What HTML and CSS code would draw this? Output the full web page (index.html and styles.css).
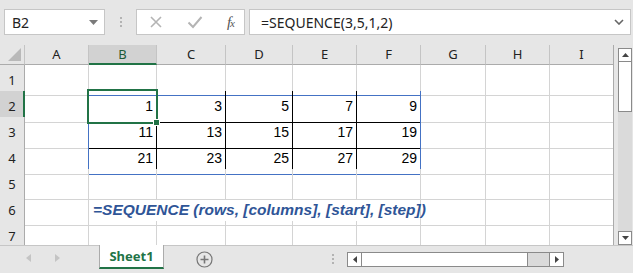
FILE: index.html
```html
<!DOCTYPE html>
<html lang="en">
<head>
<meta charset="UTF-8" />
<title>SEQUENCE</title>
<link rel="stylesheet" href="styles.css">
</head>
<body>
<div class="app">
  <!-- Formula bar -->
  <div class="toolbar">
    <div class="namebox">
      <span>B2</span>
      <svg class="caret" width="9" height="5" viewBox="0 0 9 5"><path d="M0 0h9L4.5 5z" fill="#7a7a7a"/></svg>
    </div>
    <div class="grip"><i></i><i></i><i></i></div>
    <div class="fxbox">
      <svg width="14" height="14" viewBox="0 0 14 14"><path d="M2 2l10 10M12 2L2 12" stroke="#b4b4b4" stroke-width="1.6"/></svg>
      <svg width="16" height="14" viewBox="0 0 16 14"><path d="M1.5 7.5l4.5 4.5 8.5-10" stroke="#b4b4b4" stroke-width="2" fill="none"/></svg>
      <span class="fx">f<sub>x</sub></span>
    </div>
    <div class="formula">
      <span>=SEQUENCE(3,5,1,2)</span>
      <svg width="10" height="6" viewBox="0 0 10 6"><path d="M1 1l4 4 4-4" stroke="#666" stroke-width="1.6" fill="none"/></svg>
    </div>
  </div>

  <!-- Sheet -->
  <div class="sheet">
    <div class="grid">
      <div class="row head">
        <div class="corner"><svg width="13" height="13" viewBox="0 0 13 13"><path d="M13 0V13H0z" fill="#b9b9b9"/></svg></div>
        <div class="ch">A</div><div class="ch sel">B</div><div class="ch">C</div><div class="ch">D</div>
        <div class="ch">E</div><div class="ch">F</div><div class="ch">G</div><div class="ch">H</div><div class="ch">I</div>
      </div>
      <div class="row">
        <div class="rh">1</div>
        <div class="c"></div><div class="c bb"></div><div class="c bb"></div><div class="c bb"></div><div class="c bb"></div><div class="c bb"></div>
        <div class="c"></div><div class="c"></div><div class="c"></div>
      </div>
      <div class="row">
        <div class="rh sel">2</div>
        <div class="c br"></div>
        <div class="c n k active">1</div><div class="c n k">3</div><div class="c n k">5</div><div class="c n k">7</div><div class="c n kb">9</div>
        <div class="c"></div><div class="c"></div><div class="c"></div>
      </div>
      <div class="row">
        <div class="rh">3</div>
        <div class="c br"></div>
        <div class="c n k">11</div><div class="c n k">13</div><div class="c n k">15</div><div class="c n k">17</div><div class="c n kb">19</div>
        <div class="c"></div><div class="c"></div><div class="c"></div>
      </div>
      <div class="row">
        <div class="rh">4</div>
        <div class="c br"></div>
        <div class="c n k last">21</div><div class="c n k last">23</div><div class="c n k last">25</div><div class="c n k last">27</div><div class="c n kb last">29</div>
        <div class="c"></div><div class="c"></div><div class="c"></div>
      </div>
      <div class="row">
        <div class="rh">5</div>
        <div class="c"></div><div class="c"></div><div class="c"></div><div class="c"></div><div class="c"></div><div class="c"></div>
        <div class="c"></div><div class="c"></div><div class="c"></div>
      </div>
      <div class="row">
        <div class="rh">6</div>
        <div class="c"></div>
        <div class="c syntax">=SEQUENCE (rows, [columns], [start], [step])</div>
        <div class="c"></div><div class="c"></div><div class="c"></div>
      </div>
      <div class="row">
        <div class="rh">7</div>
        <div class="c"></div><div class="c"></div><div class="c"></div><div class="c"></div><div class="c"></div><div class="c"></div>
        <div class="c"></div><div class="c"></div><div class="c"></div>
      </div>
    </div>

    <div class="vscroll">
      <div class="sbtn"><svg width="7" height="4" viewBox="0 0 7 4"><path d="M0 4h7L3.5 0z" fill="#444"/></svg></div>
      <div class="vthumb"></div>
      <div class="vtrack"></div>
      <div class="sbtn"><svg width="7" height="4" viewBox="0 0 7 4"><path d="M0 0h7L3.5 4z" fill="#444"/></svg></div>
    </div>
  </div>

  <!-- Sheet tabs -->
  <div class="tabs">
    <div class="nav">
      <svg width="5" height="8" viewBox="0 0 5 8"><path d="M5 0v8L0 4z" fill="#c4c4c4"/></svg>
      <svg width="5" height="8" viewBox="0 0 5 8"><path d="M0 0v8l5-4z" fill="#c4c4c4"/></svg>
    </div>
    <div class="tab">Sheet1</div>
    <div class="add">
      <svg width="17" height="17" viewBox="0 0 17 17"><circle cx="8.5" cy="8.5" r="7.5" fill="none" stroke="#777" stroke-width="1.2"/><path d="M8.5 4.5v8M4.5 8.5h8" stroke="#777" stroke-width="1.6"/></svg>
    </div>
    <div class="grip h"><i></i><i></i><i></i></div>
    <div class="hscroll">
      <div class="sbtn"><svg width="4" height="7" viewBox="0 0 4 7"><path d="M4 0v7L0 3.5z" fill="#444"/></svg></div>
      <div class="hthumb"></div>
      <div class="htrack"></div>
      <div class="sbtn"><svg width="4" height="7" viewBox="0 0 4 7"><path d="M0 0v7l4-3.5z" fill="#444"/></svg></div>
    </div>
  </div>
</div>
</body>
</html>
```

FILE: styles.css
```css
body {
  margin: 0;
  padding: 0;
  background: #e6e6e6;
  font-family: "Noto Sans", "Liberation Sans", sans-serif;
}
.app {
  width: 633px;
  height: 273px;
  overflow: hidden;
  display: flex;
  flex-direction: column;
  background: #e6e6e6;
}

/* Formula bar */
.toolbar {
  height: 45px;
  flex: none;
  display: flex;
  align-items: flex-start;
  padding: 9px 0 0 4px;
  box-sizing: border-box;
}
.namebox, .fxbox, .formula {
  height: 26px;
  background: #fff;
  border: 1px solid #c6c6c6;
  box-sizing: border-box;
  display: flex;
  align-items: center;
}
.namebox {
  width: 101px;
  padding: 0 6px 0 7px;
  justify-content: space-between;
  font-size: 14px;
  color: #222;
}
.grip {
  width: 31px;
  height: 26px;
  display: flex;
  flex-direction: column;
  align-items: center;
  justify-content: center;
  gap: 2px;
}
.grip i {
  width: 2px;
  height: 2px;
  background: #b3b3b3;
}
.fxbox {
  width: 109px;
  padding: 0 10px 0 12px;
  justify-content: space-between;
}
.fx {
  font-family: "Liberation Serif", serif;
  font-style: italic;
  font-size: 15px;
  color: #555;
  letter-spacing: -1px;
}
.fx sub {
  font-size: 11px;
  vertical-align: 0;
}
.formula {
  margin-left: 4px;
  width: 382px;
  padding: 0 6px 0 11px;
  justify-content: space-between;
  font-size: 14px;
  color: #222;
}

/* Sheet area */
.sheet {
  height: 200px;
  flex: none;
  display: flex;
}
.grid {
  width: 614px;
  height: 200px;
  overflow: hidden;
  background: #fff;
  border-right: 1px solid #ababab;
}
.row {
  display: grid;
  grid-template-columns: 25px 64px 68px 69px 67px 64px 64px 65px 64px 64px;
  height: 26px;
}
.row > div {
  box-sizing: border-box;
  border-right: 1px solid #d4d4d4;
  border-bottom: 1px solid #d4d4d4;
}
.row.head {
  height: 20px;
  background: #e6e6e6;
}
.row.head > div {
  border-right-color: #c4c4c4;
  border-bottom-color: #ababab;
}
.corner {
  display: flex;
  align-items: flex-end;
  justify-content: flex-end;
  padding: 0 3px 3px 0;
}
.ch {
  font-size: 13px;
  color: #222;
  text-align: center;
  line-height: 19px;
}
.ch.sel {
  background: #d2d2d2;
  color: #1d5a37;
  border-bottom: 2px solid #217346 !important;
  line-height: 18px;
}
.rh {
  background: #e6e6e6;
  font-size: 13px;
  color: #222;
  text-align: center;
  line-height: 30px;
  border-right-color: #ababab !important;
}
.rh.sel {
  background: #d2d2d2;
  border-right: 2px solid #217346 !important;
  padding-left: 1px;
}

/* Cells */
.c.n {
  font-family: "Liberation Sans", Arial, sans-serif;
  font-size: 14px;
  color: #000;
  text-align: right;
  padding-right: 3px;
  line-height: 31px;
}
.c.bb { border-bottom-color: #4472c4; }
.c.br { border-right-color: #4472c4; }
.c.k { border-right-color: #000; border-bottom-color: #000; }
.c.kb { border-right-color: #4472c4; border-bottom-color: #000; }
.c.last { border-bottom-color: #4472c4; }
.c.active { position: relative; }
.c.active::after {
  content: "";
  position: absolute;
  left: -2px;
  top: -2px;
  right: -2px;
  bottom: -2px;
  border: 2px solid #217346;
}
.c.active::before {
  content: "";
  position: absolute;
  right: -4px;
  bottom: -4px;
  width: 5px;
  height: 5px;
  background: #217346;
  border: 1px solid #fff;
  z-index: 1;
}
.syntax {
  grid-column: span 5;
  font-family: "Liberation Sans", Arial, sans-serif;
  font-weight: bold;
  font-style: italic;
  font-size: 15.5px;
  color: #2f5597;
  white-space: nowrap;
  line-height: 30px;
  padding-left: 4px;
}

/* Scrollbars */
.vscroll {
  width: 19px;
  padding: 3px 1px 0 4px;
  box-sizing: border-box;
  display: flex;
  flex-direction: column;
}
.sbtn {
  width: 14px;
  height: 14px;
  background: #fff;
  border: 1px solid #8a8a8a;
  box-sizing: border-box;
  display: flex;
  align-items: center;
  justify-content: center;
  flex: none;
}
.vthumb {
  height: 50px;
  background: #fff;
  border: 1px solid #8a8a8a;
  border-top: none;
  box-sizing: border-box;
}
.vtrack {
  flex: 1;
  background: #dadada;
}

.tabs {
  height: 28px;
  flex: none;
  display: flex;
  align-items: flex-start;
  border-top: 1px solid #c6c6c6;
  box-sizing: border-box;
}
.nav {
  width: 99px;
  display: flex;
  gap: 24px;
  padding: 8px 0 0 26px;
  box-sizing: border-box;
}
.tab {
  width: 65px;
  height: 24px;
  margin-top: -1px;
  background: #fff;
  border: 1px solid #ababab;
  border-top: none;
  border-bottom: 2px solid #217346;
  box-sizing: border-box;
  color: #217346;
  font-weight: bold;
  font-size: 13px;
  text-align: center;
  line-height: 23px;
}
.add {
  width: 50px;
  padding: 5px 0 0 32px;
  box-sizing: border-box;
}
.add svg { display: block; }
.grip.h {
  width: 28px;
  height: 20px;
  margin: 3px 0 0 105px;
}
.hscroll {
  width: 217px;
  height: 15px;
  margin-top: 6px;
  display: flex;
}
.hscroll .sbtn {
  width: 15px;
  height: 15px;
}
.hthumb {
  width: 166px;
  background: #fff;
  border: 1px solid #8a8a8a;
  border-left: none;
  box-sizing: border-box;
}
.htrack {
  flex: 1;
  background: #dadada;
  border-top: 1px solid #8a8a8a;
  border-bottom: 1px solid #8a8a8a;
}
```
